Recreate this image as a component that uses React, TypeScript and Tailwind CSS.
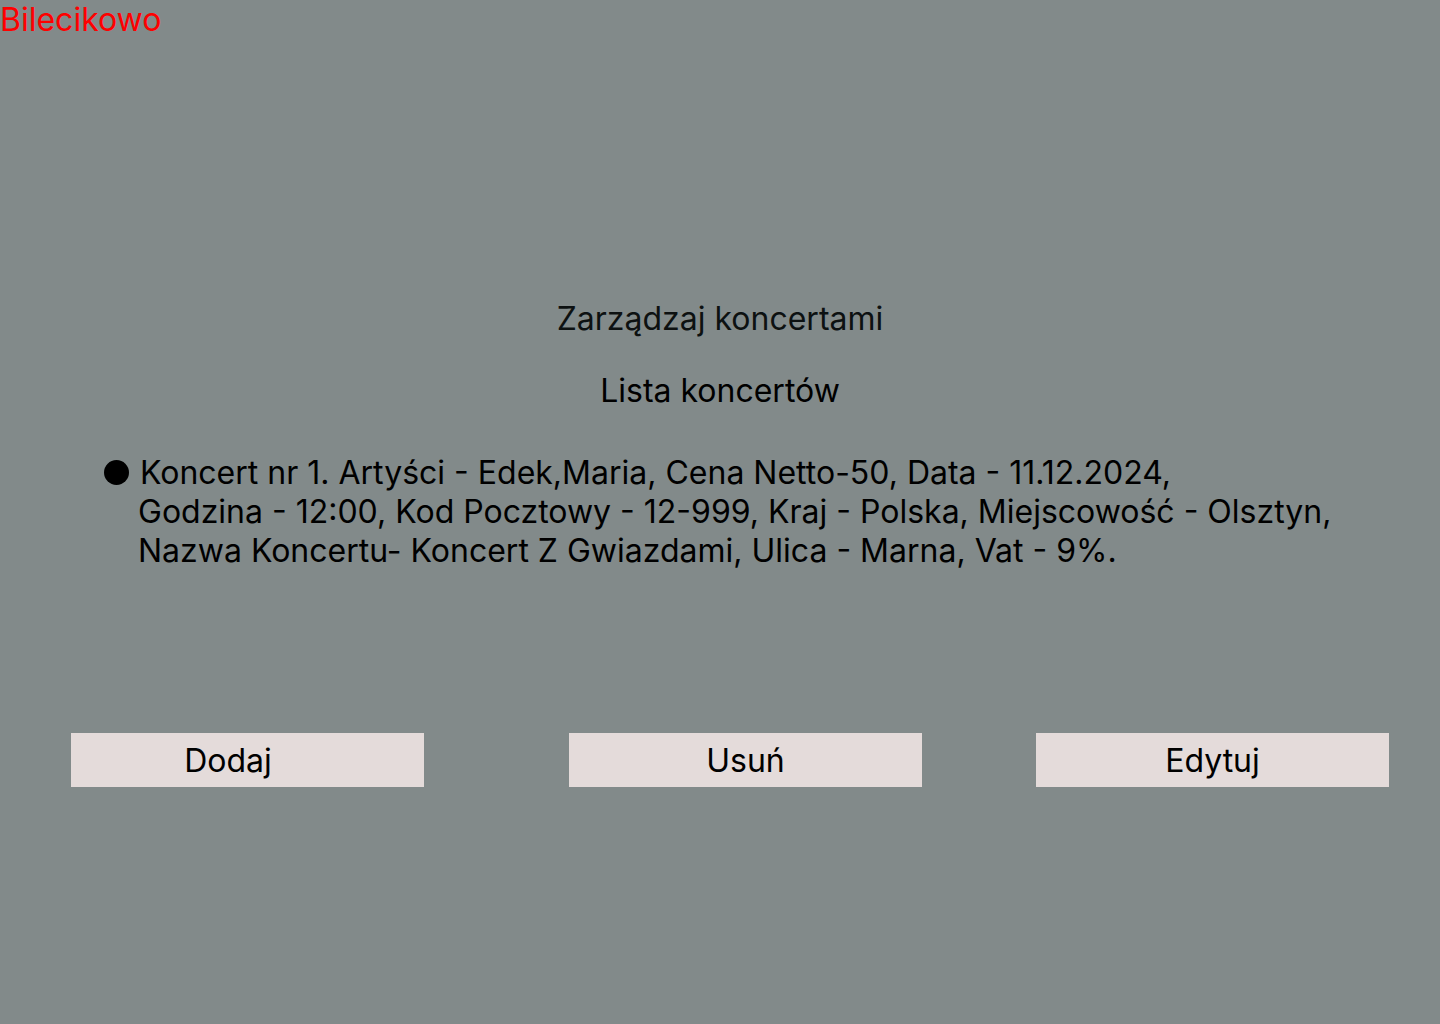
const details = [
  "Koncert nr 1. Artyści - Edek,Maria, Cena Netto-50, Data - 11.12.2024,",
  "Godzina - 12:00, Kod Pocztowy - 12-999, Kraj - Polska, Miejscowość - Olsztyn,",
  "Nazwa Koncertu- Koncert Z Gwiazdami, Ulica - Marna, Vat - 9%.",
];

export default function App() {
  return (
    <div className="flex min-h-screen flex-col bg-[#828a8a] font-['Inter',sans-serif] text-[32px] leading-[39px] text-black">
      <header className="text-[#ff0000]">Bilecikowo</header>
      <main className="flex flex-col pt-[260px]">
        <h1 className="text-center text-[#0d1111]">Zarządzaj koncertami</h1>
        <h2 className="mt-[33px] text-center">Lista koncertów</h2>
        <ul className="mt-[43px] pl-[104px]">
          <li>
            <div className="flex items-center gap-[11px]">
              <span className="size-[25px] shrink-0 rounded-full bg-black" />
              <span>{details[0]}</span>
            </div>
            <p className="pl-[34px]">{details[1]}</p>
            <p className="pl-[34px]">{details[2]}</p>
          </li>
        </ul>
        <div className="mt-[163px] grid grid-cols-[353fr_145fr_353fr_114fr_353fr] pr-[51px] pl-[71px]">
          <button type="button" className="h-[54px] bg-[#e4dbda] pr-[39px]">
            Dodaj
          </button>
          <button type="button" className="col-start-3 h-[54px] bg-[#e4dbda]">
            Usuń
          </button>
          <button type="button" className="col-start-5 h-[54px] bg-[#e4dbda]">
            Edytuj
          </button>
        </div>
      </main>
    </div>
  );
}
